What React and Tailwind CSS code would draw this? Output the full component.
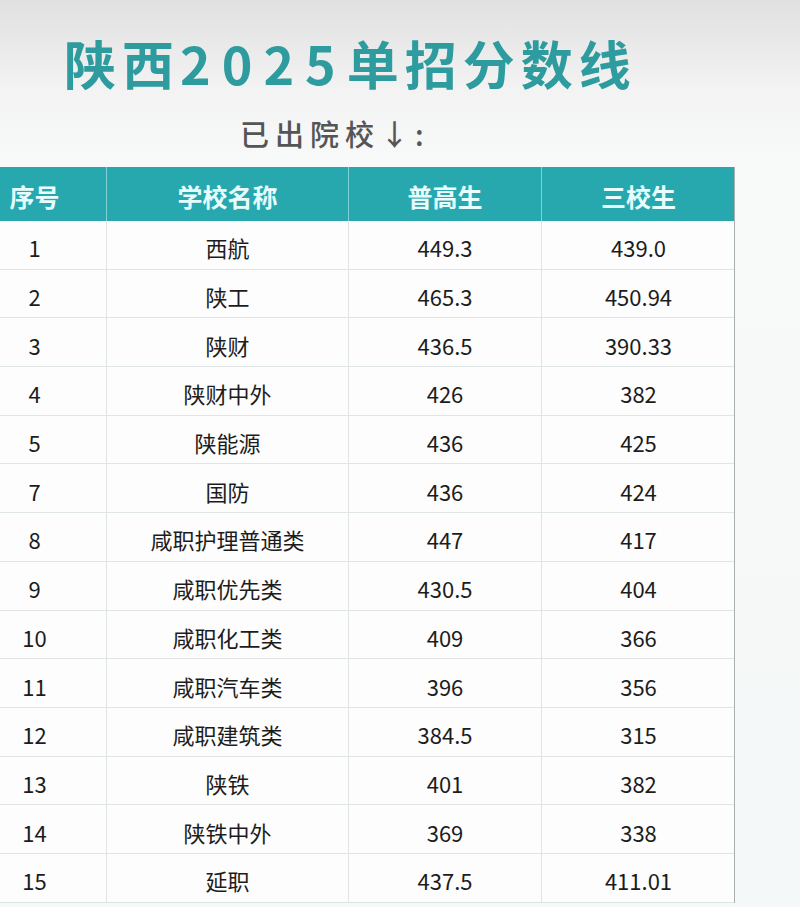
import React from "react";

const rows = [
  ["1", "西航", "449.3", "439.0"],
  ["2", "陕工", "465.3", "450.94"],
  ["3", "陕财", "436.5", "390.33"],
  ["4", "陕财中外", "426", "382"],
  ["5", "陕能源", "436", "425"],
  ["7", "国防", "436", "424"],
  ["8", "咸职护理普通类", "447", "417"],
  ["9", "咸职优先类", "430.5", "404"],
  ["10", "咸职化工类", "409", "366"],
  ["11", "咸职汽车类", "396", "356"],
  ["12", "咸职建筑类", "384.5", "315"],
  ["13", "陕铁", "401", "382"],
  ["14", "陕铁中外", "369", "338"],
  ["15", "延职", "437.5", "411.01"],
];

const font = { fontFamily: '"Noto Sans CJK SC", "Noto Sans", sans-serif' };

export default function App() {
  return (
    <div
      className="w-[800px] h-[907px] overflow-hidden bg-[linear-gradient(to_bottom,#e0e0e0_0px,#f3f3f3_90px,#f8f9f9_160px,#f5f8f8_907px)] pt-[33px]"
      style={font}
    >
      <div className="pl-[64px] text-[52px] leading-[60px] font-bold text-[#2e9c9e] tracking-[6px] whitespace-nowrap">
        陕西<span className="tracking-[11px]">2025</span>单招分数线
      </div>
      <div className="mt-[22px] pl-[240px] text-[29px] leading-[36px] font-medium text-[#555555] tracking-[6px] whitespace-nowrap">
        已出院校↓:
      </div>
      <div className="mt-[16px] ml-[-37px] w-[772px] border-r border-[#a9b0b0] bg-[#fdfdfd]">
        <div className="grid grid-cols-[144px_242px_193px_193px] h-[54px] bg-[#27a8ae] text-[25px] font-bold text-[#e8fdfd]">
          <div className="flex items-center justify-center pt-[6px] border-r border-[#7fd3d6]">序号</div>
          <div className="flex items-center justify-center pt-[6px] border-r border-[#7fd3d6]">学校名称</div>
          <div className="flex items-center justify-center pt-[6px] border-r border-[#7fd3d6]">普高生</div>
          <div className="flex items-center justify-center pt-[6px]">三校生</div>
        </div>
        {rows.map((r) => (
          <div
            key={r[0]}
            className="grid grid-cols-[144px_242px_193px_193px] h-[48.7px] border-b border-[#dfe4e4] text-[22px] text-[#1c1c1c]"
          >
            <div className="flex items-center justify-center pt-[6px] border-r border-[#dfe4e4]">{r[0]}</div>
            <div className="flex items-center justify-center pt-[6px] border-r border-[#dfe4e4]">{r[1]}</div>
            <div className="flex items-center justify-center pt-[6px] border-r border-[#dfe4e4]">{r[2]}</div>
            <div className="flex items-center justify-center pt-[6px]">{r[3]}</div>
          </div>
        ))}
      </div>
    </div>
  );
}
